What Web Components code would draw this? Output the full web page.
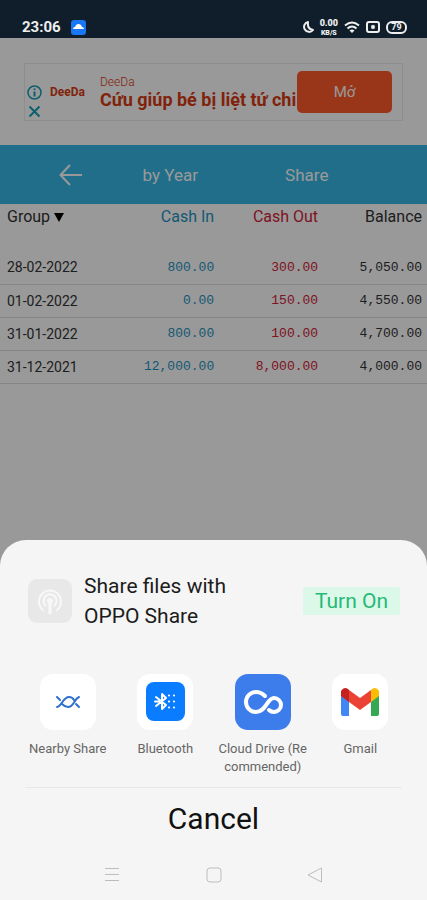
<!DOCTYPE html>
<html lang="en">
<head>
<meta charset="utf-8">
<meta name="viewport" content="width=device-width, initial-scale=1">
<title>Cash book</title>
<style>
  :root {
    --font: Roboto, "Liberation Sans", sans-serif;
    --mono: "Liberation Mono", monospace;
    --bar-blue: #36b7e6;
    --cash-in: #1f94c2;
    --cash-out: #d32238;
    --ad-orange: #d83a12;
    --ad-button: #ff5a2b;
    --sheet: #f5f5f5;
  }
  body {
    margin: 0;
    background: #fff;
    font-family: var(--font);
  }
</style>
</head>
<body>
<phone-screen>
  <status-bar slot="status" time="23:06"></status-bar>
  <ad-banner brand="DeeDa" headline="Cứu giúp bé bị liệt tứ chi" action="Mở"></ad-banner>
  <nav-bar>
    <a href="#year">by Year</a>
    <a href="#share">Share</a>
  </nav-bar>
  <cash-table></cash-table>
  <share-sheet slot="sheet">
    <share-promo slot="promo" action="Turn On">Share files with OPPO Share</share-promo>
    <share-target label="Nearby Share">
      <svg width="56" height="56" viewBox="0 0 56 56" fill="none" stroke="#2f6fd0" stroke-width="2" stroke-linecap="round">
        <rect width="56" height="56" rx="13" fill="#fff" stroke="none"/>
        <path d="M17 23l3 3M17 33c5-1 6-10 12-10 2 0 4 1 5 3M22 30c2 2 4 3 6 3 6 0 6-8 11-10M36 30l3 3"/>
      </svg>
    </share-target>
    <share-target label="Bluetooth">
      <svg width="56" height="56" viewBox="0 0 56 56" fill="none" stroke="#fff" stroke-width="2" stroke-linecap="round" stroke-linejoin="round">
        <rect width="56" height="56" rx="13" fill="#fff" stroke="none"/>
        <rect x="9" y="8" width="39" height="39" rx="8" fill="#0a7cff" stroke="none"/>
        <path d="M19 23l10 8-4 4V20l4 4-10 8M18 27.500h4"/>
        <path d="M32 21.500h0M37 21.500h0M32 27.500h0M37 27.500h0M32 33.500h0M37 33.500h0" stroke-width="2.200"/>
      </svg>
    </share-target>
    <share-target label="Cloud Drive (Re commended)">
      <svg width="56" height="56" viewBox="0 0 56 56" fill="none" stroke="#fff" stroke-width="4" stroke-linecap="round">
        <rect width="56" height="56" rx="13" fill="#3c7ceb" stroke="none"/>
        <path d="M30 22C27 19 24 18 21 18A10 10 0 0 0 21 38C31 38 32 24 39 24A7 7 0 0 1 39 38C37 38 35 37 34 36"/>
      </svg>
    </share-target>
    <share-target label="Gmail">
      <svg width="56" height="56" viewBox="0 0 56 56">
        <rect width="56" height="56" rx="13" fill="#fff"/>
        <path d="M9 20l8 6v16h-6q-2 0-2-2z" fill="#4285f4"/>
        <path d="M47 20l-8 6v16h6q2 0 2-2z" fill="#34a853"/>
        <path d="M39 16l1-1q4-3 7 2v5l-8 6z" fill="#fbbc04"/>
        <path d="M17 16l11 8 11-8v12l-11 8-11-8z" fill="#ea4335"/>
        <path d="M9 22v-5q3-5 7-2l1 1v12z" fill="#c5221f"/>
      </svg>
    </share-target>
  </share-sheet>
</phone-screen>

<script>
class PhoneScreen extends HTMLElement {
  constructor() {
    super();
    this.attachShadow({ mode: "open" });
  }

  connectedCallback() {
    this.shadowRoot.innerHTML = `
      <style>
        :host {
          display: flex;
          flex-direction: column;
          min-height: 100vh;
        }
        main {
          flex: 1;
          position: relative;
        }
        .scrim {
          position: absolute;
          inset: 0;
          background: rgba(0, 0, 0, .4);
        }
        .overlay {
          position: fixed;
          left: 0;
          right: 0;
          bottom: 0;
        }
      </style>
      <slot name="status"></slot>
      <main>
        <slot></slot>
        <div class="scrim"></div>
      </main>
      <div class="overlay"><slot name="sheet"></slot></div>
    `;
  }
}

class StatusBar extends HTMLElement {
  constructor() {
    super();
    this.attachShadow({ mode: "open" });
  }

  connectedCallback() {
    this.shadowRoot.innerHTML = `
      <style>
        :host {
          display: flex;
          align-items: center;
          box-sizing: border-box;
          height: 38px;
          padding: 16px 20px 0 22px;
          background: #101e2b;
          color: #eee;
        }
        time {
          font-size: 15px;
          font-weight: 700;
          margin-right: 10px;
        }
        .icons {
          display: flex;
          align-items: center;
          gap: 6px;
          margin-left: auto;
        }
        .rate {
          display: flex;
          flex-direction: column;
          align-items: center;
          font-size: 9px;
          font-weight: 900;
          line-height: 11px;
        }
        .rate small {
          font-size: 7px;
          line-height: 8px;
        }
        .battery {
          box-sizing: border-box;
          width: 21px;
          height: 13px;
          border: 2px solid #eee;
          border-radius: 6px;
          font-size: 9px;
          font-weight: 700;
          line-height: 9px;
          text-align: center;
        }
      </style>
      <time>${this.getAttribute("time")}</time>
      <svg width="15" height="15" viewBox="0 0 15 15">
        <rect width="15" height="15" rx="3" fill="#1877f2"/>
        <path d="M2 9q0-2 2-2 1-3 3.500-3T11 7q2 0 2 2z" fill="#fff"/>
      </svg>
      <div class="icons">
        <svg width="11" height="12" viewBox="0 0 11 12" fill="none" stroke="#eee" stroke-width="2" stroke-linejoin="round">
          <path d="M5 1A5 5 0 1 0 10 9Q4 8 5 1z"/>
        </svg>
        <div class="rate"><span>0.00</span><small>KB/S</small></div>
        <svg width="16" height="13" viewBox="0 0 16 13" fill="none" stroke="#eee" stroke-width="2">
          <path d="M1 4.500q7-6 14 0M3.500 7.500q4.500-4 9 0"/>
          <path d="M5.500 9.500q2.500-2 5 0L8 12z" fill="#eee" stroke="none"/>
        </svg>
        <svg width="14" height="12" viewBox="0 0 14 12" fill="none" stroke="#eee" stroke-width="2">
          <rect x="1" y="1" width="12" height="10" rx="2"/>
          <path d="M5.500 4.500l3 3M8.500 4.500l-3 3"/>
        </svg>
        <div class="battery">79</div>
      </div>
    `;
  }
}

class AdBanner extends HTMLElement {
  constructor() {
    super();
    this.attachShadow({ mode: "open" });
  }

  connectedCallback() {
    this.shadowRoot.innerHTML = `
      <style>
        :host {
          display: block;
          padding: 25px 24px 24px;
        }
        .ad {
          display: flex;
          align-items: center;
          box-sizing: border-box;
          height: 58px;
          padding: 0 10px 0 2px;
          border: 1px solid #ececec;
          color: var(--ad-orange);
        }
        .marks {
          display: flex;
          flex-direction: column;
          gap: 4px;
          padding-top: 20px;
        }
        .logo {
          width: 35px;
          margin: 0 15px 0 8px;
          font-size: 12px;
          font-weight: 700;
        }
        .copy {
          flex: 1;
          white-space: nowrap;
        }
        .brand {
          font-size: 12px;
          font-weight: 300;
          line-height: 16px;
        }
        .headline {
          font-size: 18px;
          font-weight: 700;
          line-height: 20px;
        }
        button {
          flex: none;
          width: 95px;
          height: 42px;
          border: 0;
          border-radius: 5px;
          background: var(--ad-button);
          color: #fff;
          font: 400 15px/20px var(--font);
        }
      </style>
      <section class="ad">
        <div class="marks">
          <svg width="15" height="15" viewBox="0 0 15 15" fill="none" stroke="#14a0b8" stroke-width="1.500">
            <circle cx="7.500" cy="7.500" r="6.500"/>
            <path d="M7.500 6.500v5M7.500 3.500v1.500" stroke-width="2"/>
          </svg>
          <svg width="15" height="15" viewBox="0 0 15 15" fill="none" stroke="#14a0b8" stroke-width="2">
            <path d="M2.500 2.500l10 10M12.500 2.500l-10 10"/>
          </svg>
        </div>
        <div class="logo">${this.getAttribute("brand")}</div>
        <div class="copy">
          <div class="brand">${this.getAttribute("brand")}</div>
          <div class="headline">${this.getAttribute("headline")}</div>
        </div>
        <button type="button">${this.getAttribute("action")}</button>
      </section>
    `;
  }
}

class NavBar extends HTMLElement {
  constructor() {
    super();
    this.attachShadow({ mode: "open" });
  }

  connectedCallback() {
    this.shadowRoot.innerHTML = `
      <style>
        :host { display: block; }
        nav {
          display: grid;
          grid-template-columns: 62px 1fr 1fr;
          align-items: center;
          justify-items: center;
          height: 59px;
          padding: 0 52px 0 40px;
          background: var(--bar-blue);
        }
        button {
          display: flex;
          padding: 0;
          border: 0;
          background: none;
        }
        ::slotted(a) {
          color: #fff;
          font-size: 17px;
          text-decoration: none;
        }
      </style>
      <nav>
        <button type="button" aria-label="Back">
          <svg width="24" height="24" viewBox="0 0 24 24" fill="none" stroke="#fff" stroke-width="2">
            <path d="M23 12H2M11 2L1.500 12 11 22"/>
          </svg>
        </button>
        <slot></slot>
      </nav>
    `;
  }
}

class CashTable extends HTMLElement {
  constructor() {
    super();
    this.attachShadow({ mode: "open" });
    this.rows = [
      ["28-02-2022", "800.00", "300.00", "5,050.00"],
      ["01-02-2022", "0.00", "150.00", "4,550.00"],
      ["31-01-2022", "800.00", "100.00", "4,700.00"],
      ["31-12-2021", "12,000.00", "8,000.00", "4,000.00"],
    ];
  }

  connectedCallback() {
    const body = this.rows.map(([date, cashIn, cashOut, balance]) => `
      <tr>
        <td>${date}</td>
        <td class="in">${cashIn}</td>
        <td class="out">${cashOut}</td>
        <td>${balance}</td>
      </tr>`).join("");

    this.shadowRoot.innerHTML = `
      <style>
        :host { display: block; }
        table {
          width: 100%;
          table-layout: fixed;
          border-collapse: collapse;
          color: #333;
        }
        th, td {
          box-sizing: border-box;
          padding: 0 5px 0 0;
          text-align: right;
        }
        th {
          height: 47px;
          padding-top: 3px;
          vertical-align: top;
          font-size: 16px;
          font-weight: 400;
          line-height: 20px;
        }
        td {
          height: 33px;
          border-bottom: 1px solid #dedede;
          font-family: var(--mono);
          font-size: 13px;
        }
        th:first-child, td:first-child {
          width: 27%;
          padding-left: 7px;
          text-align: left;
        }
        td:first-child {
          font-family: var(--font);
          font-size: 14px;
        }
        .in { color: var(--cash-in); }
        .out { color: var(--cash-out); }
        .sort {
          width: 10px;
          height: 9px;
          fill: #000;
        }
      </style>
      <table>
        <thead>
          <tr>
            <th>Group <svg class="sort" viewBox="0 0 10 9"><path d="M0 0h10L5 9z"/></svg></th>
            <th class="in">Cash In</th>
            <th class="out">Cash Out</th>
            <th>Balance</th>
          </tr>
        </thead>
        <tbody>${body}</tbody>
      </table>
    `;
  }
}

class ShareSheet extends HTMLElement {
  constructor() {
    super();
    this.attachShadow({ mode: "open" });
  }

  connectedCallback() {
    this.shadowRoot.innerHTML = `
      <style>
        :host {
          display: block;
          padding-top: 31px;
          border-radius: 26px 26px 0 0;
          background: var(--sheet);
        }
        .targets {
          display: grid;
          grid-template-columns: repeat(4, 1fr);
          padding: 43px 18px 11px 19px;
        }
        .cancel {
          display: block;
          width: calc(100% - 50px);
          height: 63px;
          margin: 0 auto;
          padding: 0;
          border: 0;
          border-top: 1px solid #e8e8e8;
          background: none;
          color: #111;
          font: 400 30px/36px var(--font);
        }
        .system {
          display: flex;
          justify-content: space-between;
          align-items: center;
          height: 50px;
          padding: 0 104px;
        }
        .system button {
          display: flex;
          padding: 0;
          border: 0;
          background: none;
        }
        .system svg {
          fill: none;
          stroke: #bdbdbd;
        }
      </style>
      <slot name="promo"></slot>
      <div class="targets"><slot></slot></div>
      <button class="cancel" type="button">Cancel</button>
      <div class="system">
        <button type="button" aria-label="Recent apps">
          <svg width="16" height="16" viewBox="0 0 16 16"><path d="M1 1.500h14M1 7.500h14M1 13.500h14"/></svg>
        </button>
        <button type="button" aria-label="Home">
          <svg width="16" height="16" viewBox="0 0 16 16"><rect x="1" y="1" width="14" height="14" rx="3"/></svg>
        </button>
        <button type="button" aria-label="Back">
          <svg width="16" height="16" viewBox="0 0 16 16"><path d="M14.500 1v14L1 8z" stroke-linejoin="round"/></svg>
        </button>
      </div>
    `;
  }
}

class SharePromo extends HTMLElement {
  constructor() {
    super();
    this.attachShadow({ mode: "open" });
  }

  connectedCallback() {
    this.shadowRoot.innerHTML = `
      <style>
        :host {
          display: flex;
          align-items: center;
          gap: 12px;
          padding: 0 27px 0 28px;
          color: #1c1c1c;
        }
        svg { flex: none; }
        p {
          flex: 1;
          max-width: 160px;
          margin: 0;
          font-size: 21px;
          line-height: 30px;
        }
        button {
          width: 97px;
          height: 28px;
          margin-left: auto;
          padding: 0;
          border: 0;
          border-radius: 2px;
          background: #dbf8e9;
          color: #26b877;
          font: 400 21px/28px var(--font);
        }
      </style>
      <svg width="44" height="44" viewBox="0 0 44 44" fill="none" stroke="#f8f8f8" stroke-width="2" stroke-linecap="round">
        <rect width="44" height="44" rx="9" fill="#e8e8e8" stroke="none"/>
        <path d="M15 31a11 11 0 1 1 14 0M17.500 26.500a6.500 6.500 0 1 1 9 0"/>
        <circle cx="22" cy="22" r="3" fill="#f8f8f8" stroke="none"/>
        <path d="M22 23v11" stroke-width="3"/>
      </svg>
      <p><slot></slot></p>
      <button type="button">${this.getAttribute("action")}</button>
    `;
  }
}

class ShareTarget extends HTMLElement {
  constructor() {
    super();
    this.attachShadow({ mode: "open" });
  }

  connectedCallback() {
    this.shadowRoot.innerHTML = `
      <style>
        :host { display: block; }
        button {
          display: flex;
          flex-direction: column;
          align-items: center;
          gap: 10px;
          width: 100%;
          padding: 0;
          border: 0;
          background: none;
          color: #666;
          font: 400 13px/18px var(--font);
        }
      </style>
      <button type="button">
        <slot></slot>
        <span>${this.getAttribute("label")}</span>
      </button>
    `;
  }
}

customElements.define("phone-screen", PhoneScreen);
customElements.define("status-bar", StatusBar);
customElements.define("ad-banner", AdBanner);
customElements.define("nav-bar", NavBar);
customElements.define("cash-table", CashTable);
customElements.define("share-sheet", ShareSheet);
customElements.define("share-promo", SharePromo);
customElements.define("share-target", ShareTarget);
</script>
</body>
</html>
